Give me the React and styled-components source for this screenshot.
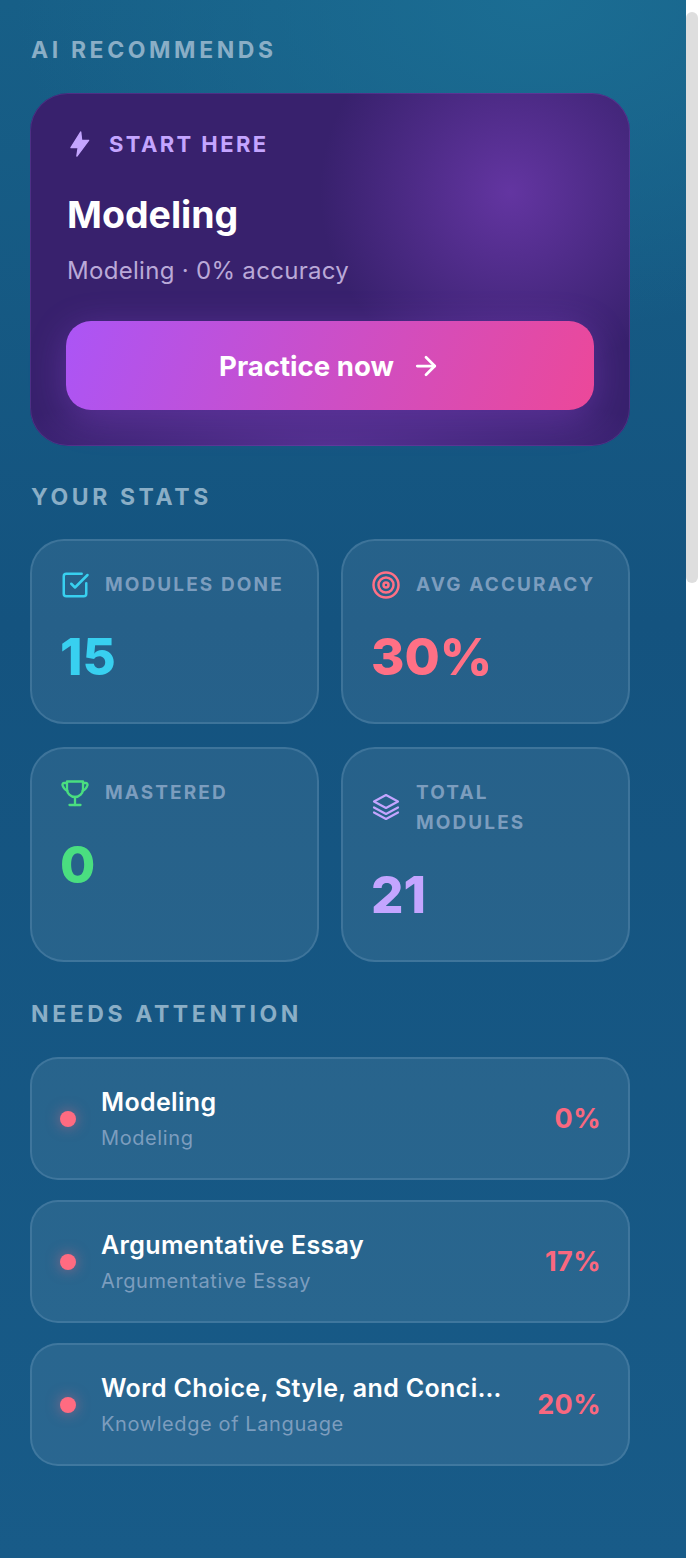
import React from 'react'
import styled, { createGlobalStyle } from 'styled-components'
import { ArrowRight, SquareCheckBig, Target } from 'lucide-react'

const GlobalStyle = createGlobalStyle`
  html, body {
    margin: 0;
    padding: 0;
    background: #fff;
  }
  * {
    box-sizing: border-box;
  }
`

// lucide's current versions of these three don't match the reference
const BoltIcon = () => (
  <svg width="28" height="28" viewBox="0 0 28 28" fill="currentColor" stroke="currentColor" strokeWidth="1.4" strokeLinejoin="round">
    <path d="M14.7 2 5 17.6h7.2L10.9 26 22.6 10.4h-7z" />
  </svg>
)

const TrophyIcon = () => (
  <svg width="30" height="30" viewBox="0 0 30 30" fill="none" stroke="currentColor" strokeWidth="2.3" strokeLinecap="round" strokeLinejoin="round">
    <path d="M7 3.5h16V11a8 8 0 0 1-16 0z" />
    <path d="M7 5H4.2a1.8 1.8 0 0 0-1.7 2.3C3.2 9.6 4.8 11.6 7.4 13" />
    <path d="M23 5h2.8a1.8 1.8 0 0 1 1.7 2.3c-.7 2.3-2.3 4.3-4.9 5.7" />
    <path d="M15 19v8" />
    <path d="M9.5 27h11" />
  </svg>
)

const StackIcon = () => (
  <svg width="30" height="30" viewBox="0 0 30 30" fill="none" stroke="currentColor" strokeWidth="2.2" strokeLinecap="round" strokeLinejoin="round">
    <path d="M15 2 27 8.5 15 15 3 8.5z" />
    <path d="M3 14.5 15 21l12-6.5" />
    <path d="M3 19.5 15 26l12-6.5" />
  </svg>
)

const CheckIcon = () => <SquareCheckBig size={30} strokeWidth={2} />
const TargetIcon = () => <Target size={30} strokeWidth={2} />

const stats = [
  { label: 'Modules done', value: '15', color: '#38d0f0', Icon: CheckIcon },
  { label: 'Avg accuracy', value: '30%', color: '#ff7085', Icon: TargetIcon },
  { label: 'Mastered', value: '0', color: '#4ade80', Icon: TrophyIcon },
  { label: 'Total modules', value: '21', color: '#c4a5ff', Icon: StackIcon },
]

const attention = [
  { title: 'Modeling', sub: 'Modeling', pct: '0%' },
  { title: 'Argumentative Essay', sub: 'Argumentative Essay', pct: '17%' },
  { title: 'Word Choice, Style, and Conciseness', sub: 'Knowledge of Language', pct: '20%' },
]

function App() {
  return (
    <Page>
      <GlobalStyle />
      <Main>
        <SectionLabel>AI Recommends</SectionLabel>
        <HeroCard>
          <HeroTag>
            <BoltIcon />
            <span>Start here</span>
          </HeroTag>
          <HeroTitle>Modeling</HeroTitle>
          <HeroSub>Modeling · 0% accuracy</HeroSub>
          <PracticeButton>
            Practice now
            <ArrowRight size={30} strokeWidth={2.2} />
          </PracticeButton>
        </HeroCard>

        <SectionLabel>Your stats</SectionLabel>
        <StatGrid>
          {stats.map(({ label, value, color, Icon }) => (
            <StatCard key={label}>
              <StatHead $color={color}>
                <Icon />
                <StatLabel>{label}</StatLabel>
              </StatHead>
              <StatValue $color={color}>{value}</StatValue>
            </StatCard>
          ))}
        </StatGrid>

        <SectionLabel>Needs attention</SectionLabel>
        <AttentionList>
          {attention.map((item) => (
            <AttentionRow key={item.title}>
              <Dot />
              <AttentionText>
                <AttentionTitle>{item.title}</AttentionTitle>
                <AttentionSub>{item.sub}</AttentionSub>
              </AttentionText>
              <Percent>{item.pct}</Percent>
            </AttentionRow>
          ))}
        </AttentionList>
      </Main>
      <ScrollTrack>
        <ScrollThumb />
      </ScrollTrack>
    </Page>
  )
}

export default App

const Page = styled.div`
  display: flex;
  width: 698px;
  height: 1558px;
  overflow: hidden;
  font-family: Inter, 'Liberation Sans', sans-serif;
`

const Main = styled.main`
  flex: 1;
  min-width: 0;
  padding: 36px 56px 0 30px;
  background:
    radial-gradient(ellipse 520px 330px at 78% 0%, #1b6d93 0%, rgba(27, 109, 147, 0) 100%),
    linear-gradient(180deg, #175f87 0%, #14537f 40%, #185b88 100%);
`

const SectionLabel = styled.h2`
  margin: 0 0 29px 1px;
  font-size: 23px;
  line-height: 28px;
  font-weight: 700;
  letter-spacing: 3.6px;
  text-transform: uppercase;
  color: #8aaec6;
`

const HeroCard = styled.section`
  height: 353px;
  margin-bottom: 37px;
  padding: 36px 36px 0;
  border-radius: 38px;
  background:
    radial-gradient(ellipse 190px 190px at 80% 28%, #6335a1 0%, rgba(99, 53, 161, 0) 100%),
    radial-gradient(ellipse 340px 60px at 50% 100%, #53308f 0%, rgba(83, 48, 143, 0) 100%),
    #38216d;
  box-shadow: inset 0 0 0 1px rgba(130, 80, 190, 0.3);
`

const HeroTag = styled.div`
  display: flex;
  align-items: center;
  gap: 15px;
  height: 30px;
  color: #c4a5ff;
  font-size: 22px;
  font-weight: 700;
  letter-spacing: 2.4px;
  text-transform: uppercase;
`

const HeroTitle = styled.h3`
  margin: 33px 0 0 1px;
  font-size: 37.5px;
  line-height: 46px;
  font-weight: 700;
  color: #fff;
`

const HeroSub = styled.p`
  margin: 17px 0 0 1px;
  font-size: 24px;
  line-height: 32px;
  letter-spacing: 0.3px;
  color: #baa9d8;
`

const PracticeButton = styled.button`
  display: flex;
  align-items: center;
  justify-content: center;
  gap: 17px;
  width: 100%;
  height: 89px;
  margin-top: 34px;
  border: 0;
  border-radius: 25px;
  background: linear-gradient(110deg, #ab55f6 0%, #ec4899 100%);
  box-shadow: 0 8px 36px rgba(168, 85, 247, 0.3);
  color: #fff;
  font-family: inherit;
  font-size: 27.6px;
  font-weight: 700;
`

const StatGrid = styled.div`
  display: grid;
  grid-template-columns: 289px 289px;
  grid-template-rows: 185px 215px;
  gap: 23px 22px;
  margin: -1px 0 38px;
`

const StatCard = styled.div`
  padding: 29px 28px 0;
  border: 2px solid rgba(130, 170, 205, 0.25);
  border-radius: 34px;
  background: rgba(255, 255, 255, 0.08);
`

const StatHead = styled.div`
  display: flex;
  align-items: center;
  gap: 15px;
  color: ${(p) => p.$color};

  svg {
    flex: none;
  }
`

const StatLabel = styled.span`
  font-size: 19px;
  line-height: 30px;
  font-weight: 700;
  letter-spacing: 2.1px;
  text-transform: uppercase;
  color: #7c9dbe;
`

const StatValue = styled.div`
  margin-top: 25px;
  font-size: 51px;
  line-height: 64px;
  font-weight: 800;
  color: ${(p) => p.$color};
`

const AttentionList = styled.div`
  display: flex;
  flex-direction: column;
  gap: 20px;
`

const AttentionRow = styled.div`
  display: flex;
  align-items: center;
  height: 123px;
  padding: 0 27px 0 28px;
  border: 2px solid rgba(130, 170, 205, 0.25);
  border-radius: 28px;
  background: rgba(255, 255, 255, 0.08);
`

const Dot = styled.span`
  flex: none;
  width: 16px;
  height: 16px;
  margin-right: 25px;
  border-radius: 50%;
  background: #ff6b81;
  box-shadow: 0 0 14px rgba(255, 107, 129, 0.5);
`

const AttentionText = styled.div`
  flex: 1;
  min-width: 0;
  margin-top: 2px;
`

const AttentionTitle = styled.div`
  overflow: hidden;
  white-space: nowrap;
  text-overflow: ellipsis;
  font-size: 25px;
  line-height: 36px;
  font-weight: 600;
  letter-spacing: 0.35px;
  color: #fff;
`

const AttentionSub = styled.div`
  margin-top: 1px;
  font-size: 20px;
  line-height: 34px;
  letter-spacing: 0.6px;
  color: #7c9dbe;
`

const Percent = styled.span`
  flex: none;
  margin-left: 32px;
  font-size: 27px;
  font-weight: 700;
  letter-spacing: 0.4px;
  color: #f9687f;
`

const ScrollTrack = styled.aside`
  flex: none;
  width: 12px;
  padding-top: 12px;
  background: #fff;
`

const ScrollThumb = styled.div`
  height: 571px;
  border-radius: 6px;
  background: #dedede;
`
